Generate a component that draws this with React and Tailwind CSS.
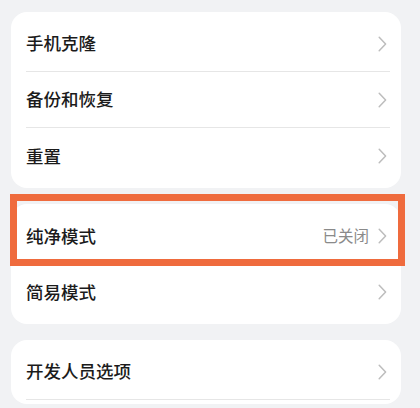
import React from "react";

const Chevron = () => (
  <svg width="9" height="16" viewBox="0 0 9 16" fill="none" className="shrink-0">
    <path d="M1.2 1.2 L7.6 8 L1.2 14.8" stroke="#bdbdbd" strokeWidth="1.5" strokeLinecap="round" strokeLinejoin="round" />
  </svg>
);

const Row = ({ label, value, divider, highlight }) => (
  <div className="relative">
    <div
      className={`flex items-center h-[56px] ml-[15px] mr-[11px] pr-[3px] ${
        divider ? "border-b border-[#e6e6e6]" : ""
      }`}
    >
      <span className="flex-1 text-[17.5px] font-medium text-[#1b1b1b]">{label}</span>
      {value && <span className="mr-[9px] text-[15.5px] text-[#8a8a8a]">{value}</span>}
      <Chevron />
    </div>
    {highlight && (
      <div className="absolute -left-[1px] -right-[4px] -top-[14px] -bottom-[2px] border-[7px] border-[#ef6b3d] pointer-events-none" />
    )}
  </div>
);

const Card = ({ rows }) => (
  <div className="bg-white rounded-[16px] py-[4px]">
    {rows.map((r, i) => (
      <Row key={r.label} {...r} divider={r.divider ?? i < rows.length - 1} />
    ))}
  </div>
);

export default function App() {
  return (
    <div
      className="w-[420px] h-[408px] overflow-hidden bg-[#f1f2f4] pt-[12px] pl-[11px] pr-[19px] flex flex-col gap-[16px]"
      style={{ fontFamily: '"Noto Sans CJK SC", "Noto Sans", sans-serif' }}
    >
      <Card rows={[{ label: "手机克隆" }, { label: "备份和恢复" }, { label: "重置" }]} />
      <Card rows={[{ label: "纯净模式", value: "已关闭", highlight: true, divider: false }, { label: "简易模式" }]} />
      <Card rows={[{ label: "开发人员选项", divider: true }]} />
    </div>
  );
}
